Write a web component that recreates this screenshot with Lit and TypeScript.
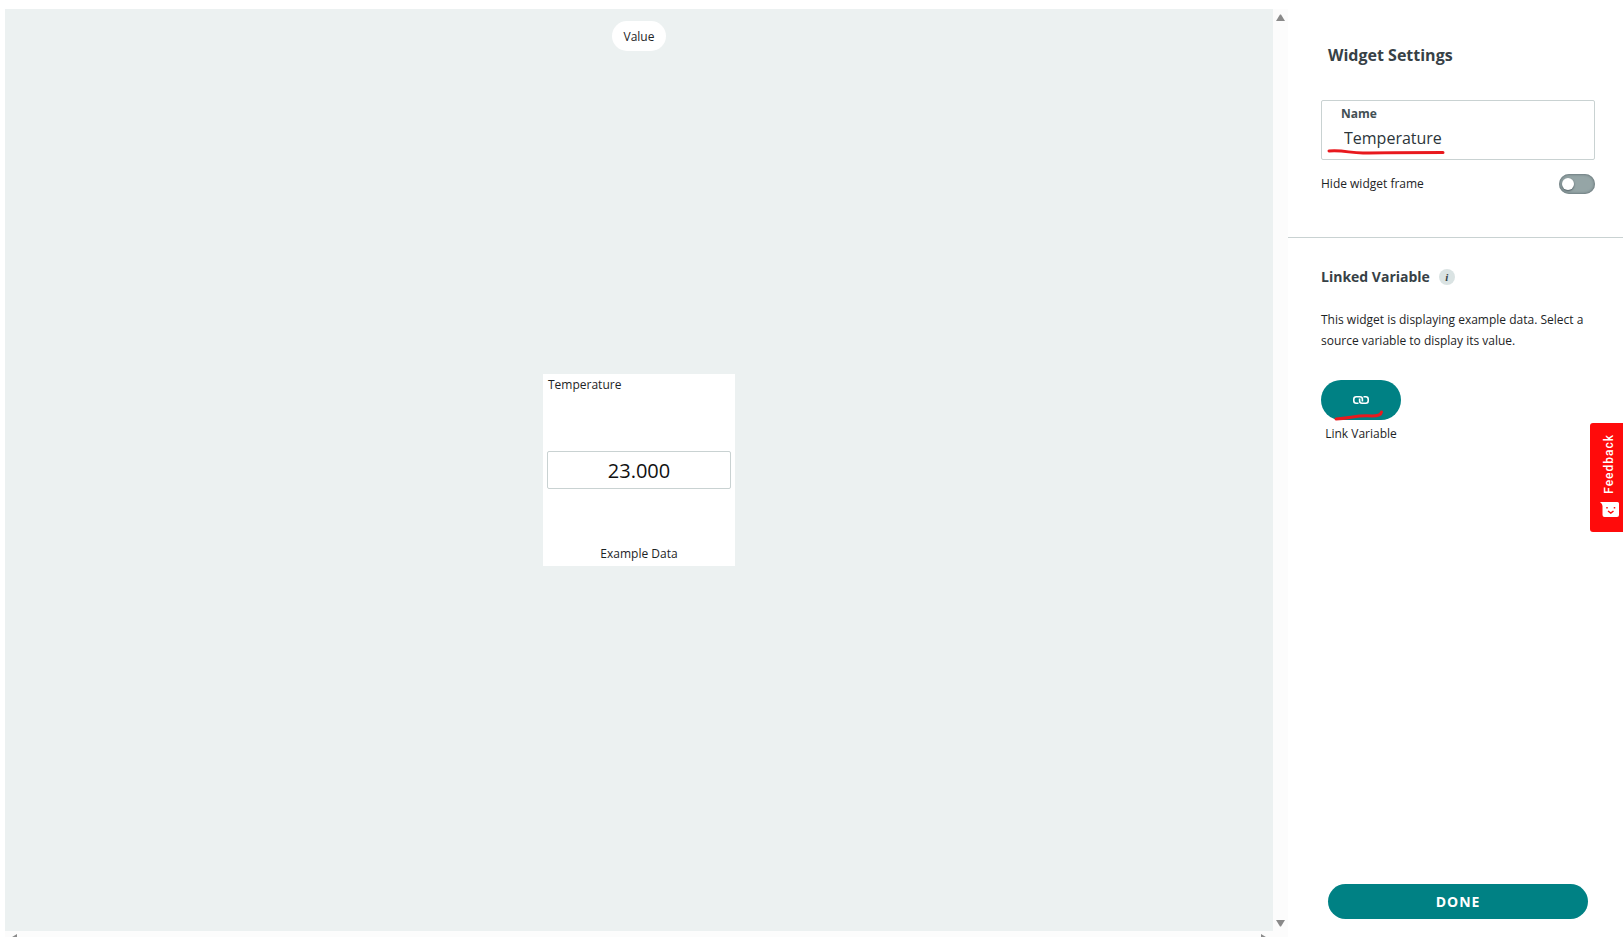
import { LitElement, html, css } from "lit";
import { customElement, property, state } from "lit/decorators.js";

@customElement("value-widget")
class ValueWidget extends LitElement {
  @property() name = "";
  @property() value = "";

  static styles = css`
    :host {
      box-sizing: border-box;
      display: flex;
      flex-direction: column;
      justify-content: space-between;
      width: 192px;
      height: 192px;
      padding: 1px 4px;
      background: #fff;
      font-size: 12px;
      line-height: 20px;
    }
    .title {
      padding-left: 1px;
    }
    .value {
      border: 1px solid #c9d2d2;
      border-radius: 2px;
      padding-top: 1px;
      font-size: 20px;
      line-height: 35px;
      text-align: center;
      color: #111;
    }
    .note {
      text-align: center;
      padding-bottom: 1px;
    }
  `;

  render() {
    return html`
      <div class="title">${this.name}</div>
      <div class="value">${this.value}</div>
      <div class="note">Example Data</div>
    `;
  }
}

@customElement("app-root")
class AppRoot extends LitElement {
  @state() private name = "Temperature";
  @state() private hideFrame = false;

  static styles = css`
    :host {
      display: block;
      font-family: "Open Sans", "Noto Sans", sans-serif;
      font-size: 12px;
      line-height: 20px;
      color: #1d2426;
    }
    * {
      box-sizing: border-box;
    }
    .page {
      display: grid;
      grid-template-columns: minmax(0, 1fr) 335px;
      height: 100vh;
      padding: 9px 0 0 5px;
      background: #fff;
      overflow: hidden;
    }
    .preview {
      display: grid;
      grid-template-columns: minmax(0, 1fr) 15px;
      grid-template-rows: minmax(0, 1fr) 6px;
      background: #fcfcfc;
    }
    .stage {
      display: grid;
      grid-template-rows: 1fr auto 1fr;
      justify-items: center;
      background: #ecf1f1;
    }
    .type {
      align-self: start;
      margin-top: 12px;
      padding: 6px 12px 4px;
      border-radius: 15px;
      background: #fff;
    }
    .track {
      display: flex;
      justify-content: space-between;
      overflow: hidden;
    }
    .track.vertical {
      flex-direction: column;
      align-items: center;
      padding: 5px 0 4px;
    }
    .track.horizontal {
      padding: 3px 5px 0;
    }
    .track svg {
      display: block;
      flex: none;
      fill: #8a8a8a;
    }
    .panel {
      display: flex;
      flex-direction: column;
    }
    .general {
      padding: 34px 28px 43px 33px;
      border-bottom: 1px solid #c9d2d2;
    }
    h1 {
      margin: 0 0 33px;
      padding-left: 7px;
      font-size: 16px;
      line-height: 24px;
      font-weight: 700;
      color: #374146;
    }
    .field {
      position: relative;
      display: flex;
      flex-direction: column;
      height: 60px;
      padding: 3px 19px 0;
      border: 1px solid #c9d2d2;
      border-radius: 2px;
    }
    .field label {
      font-weight: 700;
      color: #434f54;
    }
    .field input {
      width: 100%;
      height: 28px;
      padding: 0 3px;
      border: 0;
      outline: 0;
      background: none;
      font: inherit;
      font-size: 16px;
      color: #2c353a;
    }
    .mark {
      position: absolute;
      pointer-events: none;
      fill: none;
      stroke: #e8191e;
      stroke-width: 3;
      stroke-linecap: round;
      stroke-linejoin: round;
    }
    .field .mark {
      left: 3px;
      bottom: 3px;
    }
    .link .mark {
      left: 11px;
      bottom: -2px;
    }
    .row {
      display: flex;
      align-items: center;
      justify-content: space-between;
      padding-top: 14px;
    }
    .switch {
      appearance: none;
      display: flex;
      align-items: center;
      width: 36px;
      height: 20px;
      margin: 0;
      padding: 0 3px;
      border-radius: 10px;
      background: #95a5a6;
      box-shadow: inset 0 0 3px #4e5b61;
      cursor: pointer;
    }
    .switch::before {
      content: "";
      width: 12px;
      height: 12px;
      border-radius: 50%;
      background: #fff;
      box-shadow: 0 1px 2px #4e5b61;
    }
    .switch:checked {
      justify-content: flex-end;
      background: #008184;
    }
    .variable {
      flex: 1;
      padding: 28px 28px 0 33px;
    }
    .heading {
      display: flex;
      align-items: center;
      gap: 9px;
    }
    h2 {
      margin: 0;
      font-size: 14px;
      line-height: 22px;
      font-weight: 700;
      color: #374146;
    }
    .info {
      width: 16px;
      height: 16px;
      padding: 0;
      border: 0;
      border-radius: 50%;
      background: #dae3e3;
      color: #374146;
      font: italic 700 11px/16px "Liberation Serif", serif;
      text-align: center;
    }
    p {
      margin: 21px 0 29px;
      line-height: 21px;
    }
    .action {
      display: inline-flex;
      flex-direction: column;
      align-items: center;
      gap: 4px;
    }
    .link {
      position: relative;
      display: flex;
      align-items: center;
      justify-content: center;
      width: 80px;
      height: 40px;
      padding: 0;
      border: 0;
      border-radius: 20px;
      background: #008184;
      cursor: pointer;
    }
    .done {
      margin: 0 35px 18px 40px;
      padding: 0;
      border: 0;
      border-radius: 18px;
      background: #008184;
      color: #fff;
      font: inherit;
      font-size: 14px;
      line-height: 35px;
      font-weight: 700;
      letter-spacing: 1px;
      cursor: pointer;
    }
    .feedback {
      position: fixed;
      right: 0;
      top: 423px;
      display: flex;
      flex-direction: column;
      align-items: center;
      justify-content: space-between;
      width: 33px;
      height: 109px;
      padding: 11px 0 15px 5px;
      border: 0;
      border-radius: 3px 0 0 3px;
      background: #ff0b0b;
      color: #fff;
      font: 500 12px/16px Roboto, sans-serif;
      letter-spacing: 1px;
      cursor: pointer;
    }
    .feedback span {
      writing-mode: vertical-rl;
      transform: rotate(180deg);
    }
  `;

  render() {
    return html`
      <div class="page">
        <main class="preview">
          <section class="stage">
            <div class="type">Value</div>
            <value-widget .name=${this.name} .value=${"23.000"}></value-widget>
          </section>
          <div class="track vertical">
            <svg width="9" height="7"><path d="M0 7L4 0.5H5L9 7z" /></svg>
            <svg width="9" height="7"><path d="M0 0L4 6.5H5L9 0z" /></svg>
          </div>
          <div class="track horizontal">
            <svg width="7" height="9"><path d="M7 0L0.5 4V5L7 9z" /></svg>
            <svg width="7" height="9"><path d="M0 0L6.5 4V5L0 9z" /></svg>
          </div>
        </main>
        <aside class="panel">
          <section class="general">
            <h1>Widget Settings</h1>
            <div class="field">
              <label for="name">Name</label>
              <input
                id="name"
                type="text"
                .value=${this.name}
                @input=${(e: Event) => (this.name = (e.target as HTMLInputElement).value)}
              />
              <svg class="mark" width="122" height="8"><path d="M4 3C20 2 24 5 38 5C60 4.500 90 4.500 118 4.500" /></svg>
            </div>
            <div class="row">
              <label for="frame">Hide widget frame</label>
              <input
                id="frame"
                class="switch"
                type="checkbox"
                .checked=${this.hideFrame}
                @change=${(e: Event) => (this.hideFrame = (e.target as HTMLInputElement).checked)}
              />
            </div>
          </section>
          <section class="variable">
            <div class="heading">
              <h2>Linked Variable</h2>
              <button class="info" aria-label="About linked variables">i</button>
            </div>
            <p>This widget is displaying example data. Select a source variable to display its value.</p>
            <div class="action">
              <button class="link" id="link" aria-labelledby="link-label">
                <svg width="16" height="8" fill="none" stroke="#fff" stroke-width="1.600">
                  <path d="M5.500 7.200H3.200Q0.800 7.200 0.800 4.800V3.200Q0.800 0.800 3.200 0.800H7Q9.400 0.800 9.400 3.200V5.400" />
                  <path d="M10.500 0.800H12.800Q15.200 0.800 15.200 3.200V4.800Q15.200 7.200 12.800 7.200H9Q6.600 7.200 6.600 4.800V2.600" />
                </svg>
                <svg class="mark" width="54" height="14"><path d="M4 11C20 10 24 7 40 8C46 8 49 7 49.500 4" /></svg>
              </button>
              <label id="link-label" for="link">Link Variable</label>
            </div>
          </section>
          <button class="done">DONE</button>
        </aside>
        <button class="feedback">
          <span>Feedback</span>
          <svg width="19" height="15">
            <path fill="#fff" d="M0 0H17.500Q19 0 19 1.500V13Q19 15 17 15H4.500Q2.500 15 2.500 13V4Q2.500 2 0 0z" />
            <path fill="none" stroke="#ff0b0b" stroke-width="1.500" d="M7 5V6.500M14.500 5V6.500M8 9L10.800 11L13.500 9" />
          </svg>
        </button>
      </div>
    `;
  }
}
